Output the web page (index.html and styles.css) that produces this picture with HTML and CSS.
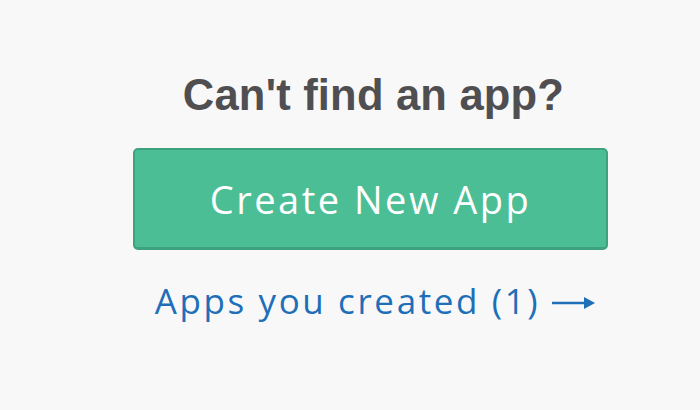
FILE: index.html
```html
<!DOCTYPE html>
<html lang="en">
<head>
    <meta charset="UTF-8">
    <title>Create App</title>
    <link rel="stylesheet" href="styles.css">
</head>
<body>

<div class="panel">
    <h2 class="prompt">Can't find an app?</h2>
    <button class="create-btn" type="button">Create New App</button>
    <a class="my-apps" href="#">Apps you created (1)
        <svg class="arrow" width="44" height="14" viewBox="0 0 44 14">
            <path d="M0 7 H38" stroke="#1e6fb8" stroke-width="2.6" fill="none"/>
            <path d="M32 1 L43 7 L32 13 Z" fill="#1e6fb8"/>
        </svg>
    </a>
</div>

</body>
</html>
```

FILE: styles.css
```css
body {
    margin: 0;
    padding: 0;
    background-color: #f8f8f8;
    font-family: "Liberation Sans", Arial, sans-serif;
}
.panel {
    width: 475px;
    margin-left: 133px;
    padding-top: 67px;
    display: flex;
    flex-direction: column;
    align-items: center;
}
.prompt {
    margin: 0 0 0 6px;
    font-size: 43.5px;
    font-weight: bold;
    line-height: 56px;
    color: #4f4f52;
    letter-spacing: 0.2px;
}
.create-btn {
    width: 475px;
    height: 102px;
    margin-top: 25px;
    background-color: #4bbe96;
    border: 2px solid #3ea27f;
    border-bottom-width: 3px;
    border-radius: 5px;
    color: #fff;
    font-family: "Open Sans", sans-serif;
    font-size: 38px;
    letter-spacing: 2.5px;
    cursor: pointer;
}
.my-apps {
    margin-top: 27px;
    margin-left: 10px;
    display: flex;
    align-items: center;
    gap: 12px;
    color: #1e6fb8;
    font-family: "Open Sans", sans-serif;
    font-size: 35px;
    letter-spacing: 2.6px;
    text-decoration: none;
}
.arrow {
    margin-top: 4px;
}
```
